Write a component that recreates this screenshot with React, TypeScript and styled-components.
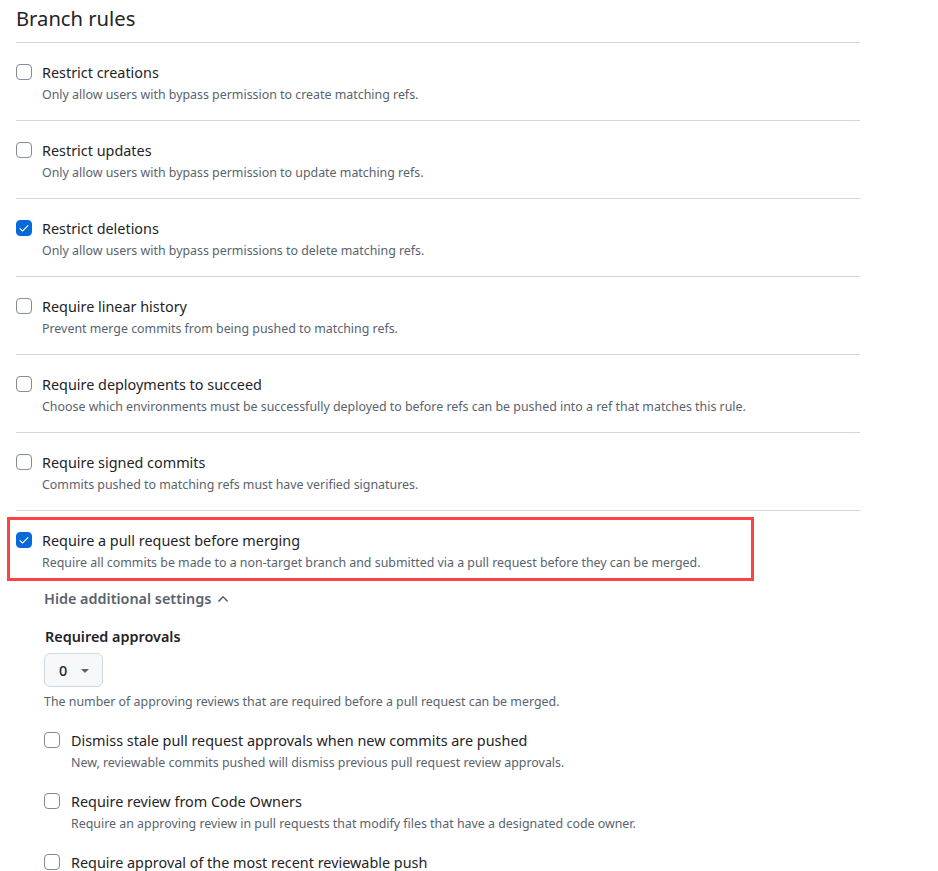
import styled, { createGlobalStyle } from "styled-components";

const GlobalStyle = createGlobalStyle`
    body {
        margin: 0;
        background: #ffffff;
        font-family: "Noto Sans", "Liberation Sans", sans-serif;
        color: #1f2328;
    }
`;

const Page = styled.div`
    width: 844px;
    padding: 0 16px;
`;

const Heading = styled.h2`
    margin: 0;
    font-size: 20.2px;
    font-weight: 400;
    line-height: 36px;
    padding-bottom: 6px;
    border-bottom: 1px solid #d1d9e0;
`;

const Rule = styled.div<{ $first?: boolean }>`
    position: relative;
    display: flex;
    align-items: flex-start;
    gap: 10px;
    padding: 20px 0 16px;
    border-top: ${(p) => (p.$first ? "none" : "1px solid #d1d9e0")};
`;

const SubRule = styled.div`
    display: flex;
    align-items: flex-start;
    gap: 11px;
    margin-top: 20px;
`;

const Box = styled.span<{ $checked?: boolean }>`
    flex: none;
    width: 16px;
    height: 16px;
    margin-top: 1px;
    box-sizing: border-box;
    border-radius: 4px;
    border: 1px solid ${(p) => (p.$checked ? "#0969da" : "#818b98")};
    background: ${(p) => (p.$checked ? "#0969da" : "#ffffff")};
    display: flex;
    align-items: center;
    justify-content: center;
`;

const Texts = styled.div`
    display: flex;
    flex-direction: column;
`;

const Title = styled.div`
    font-size: 14.4px;
    line-height: 20px;
    color: #1f2328;
`;

const Desc = styled.div`
    font-size: 12.4px;
    line-height: 18px;
    color: #59636e;
    margin-top: 3px;
`;

const Highlight = styled.div`
    position: absolute;
    left: -9px;
    top: 6px;
    width: 747px;
    height: 64px;
    box-sizing: border-box;
    border: 3px solid #ff4343;
    pointer-events: none;
`;

const Extra = styled.div`
    padding-left: 28px;
`;

const ToggleLink = styled.button`
    display: flex;
    align-items: center;
    gap: 4px;
    margin-top: 1px;
    padding: 0;
    border: 0;
    background: none;
    font-family: inherit;
    font-size: 14.4px;
    font-weight: 600;
    line-height: 20px;
    color: #59636e;
    cursor: pointer;
`;

const FieldLabel = styled.div`
    margin-top: 18px;
    padding-left: 1px;
    font-size: 14.4px;
    font-weight: 600;
    line-height: 20px;
    color: #1f2328;
`;

const Select = styled.button`
    margin-top: 6px;
    width: 59px;
    height: 34px;
    display: flex;
    align-items: center;
    gap: 10px;
    padding: 0 0 0 14px;
    box-sizing: border-box;
    border: 1px solid #d1d9e0;
    border-radius: 6px;
    background: #f6f8fa;
    font-family: inherit;
    font-size: 14.4px;
    font-weight: 500;
    color: #1f2328;
`;

const Hint = styled.div`
    margin-top: 6px;
    font-size: 12.4px;
    line-height: 18px;
    color: #59636e;
`;

function Check() {
    return (
        <svg width="12" height="12" viewBox="0 0 16 16" fill="#ffffff">
            <path d="M13.78 4.22a.75.75 0 0 1 0 1.06l-7.25 7.25a.75.75 0 0 1-1.06 0L2.22 9.28a.751.751 0 0 1 .018-1.042.751.751 0 0 1 1.042-.018L6 10.94l6.72-6.72a.75.75 0 0 1 1.06 0Z" />
        </svg>
    );
}

function Checkbox({ checked }: { checked?: boolean }) {
    return <Box $checked={checked}>{checked && <Check />}</Box>;
}

const rules = [
    { title: "Restrict creations", desc: "Only allow users with bypass permission to create matching refs." },
    { title: "Restrict updates", desc: "Only allow users with bypass permission to update matching refs." },
    { title: "Restrict deletions", desc: "Only allow users with bypass permissions to delete matching refs.", checked: true },
    { title: "Require linear history", desc: "Prevent merge commits from being pushed to matching refs." },
    { title: "Require deployments to succeed", desc: "Choose which environments must be successfully deployed to before refs can be pushed into a ref that matches this rule." },
    { title: "Require signed commits", desc: "Commits pushed to matching refs must have verified signatures." },
];

const subRules = [
    { title: "Dismiss stale pull request approvals when new commits are pushed", desc: "New, reviewable commits pushed will dismiss previous pull request review approvals." },
    { title: "Require review from Code Owners", desc: "Require an approving review in pull requests that modify files that have a designated code owner." },
    { title: "Require approval of the most recent reviewable push", desc: "Whether the most recent reviewable push must be approved by someone other than the person who pushed it." },
];

export default function App() {
    return (
        <Page>
            <GlobalStyle />
            <Heading>Branch rules</Heading>
            {rules.map((r, i) => (
                <Rule key={r.title} $first={i === 0}>
                    <Checkbox checked={r.checked} />
                    <Texts>
                        <Title>{r.title}</Title>
                        <Desc>{r.desc}</Desc>
                    </Texts>
                </Rule>
            ))}
            <Rule>
                <Checkbox checked />
                <Texts>
                    <Title>Require a pull request before merging</Title>
                    <Desc>Require all commits be made to a non-target branch and submitted via a pull request before they can be merged.</Desc>
                </Texts>
                <Highlight />
            </Rule>
            <Extra>
                <ToggleLink>
                    Hide additional settings
                    <svg width="16" height="16" viewBox="0 0 16 16" fill="#59636e">
                        <path d="M3.22 10.53a.749.749 0 0 1 0-1.06l4.25-4.25a.749.749 0 0 1 1.06 0l4.25 4.25a.749.749 0 0 1-1.06 1.06L8 6.811 4.78 10.53a.749.749 0 0 1-1.06 0Z" />
                    </svg>
                </ToggleLink>
                <FieldLabel>Required approvals</FieldLabel>
                <Select>
                    0
                    <svg width="16" height="16" viewBox="0 0 16 16" fill="#59636e">
                        <path d="m4.427 7.427 3.396 3.396a.25.25 0 0 0 .354 0l3.396-3.396A.25.25 0 0 0 11.396 7H4.604a.25.25 0 0 0-.177.427Z" />
                    </svg>
                </Select>
                <Hint>The number of approving reviews that are required before a pull request can be merged.</Hint>
                {subRules.map((r) => (
                    <SubRule key={r.title}>
                        <Checkbox />
                        <Texts>
                            <Title>{r.title}</Title>
                            <Desc>{r.desc}</Desc>
                        </Texts>
                    </SubRule>
                ))}
            </Extra>
        </Page>
    );
}
